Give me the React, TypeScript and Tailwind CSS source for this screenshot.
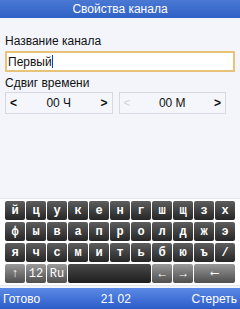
import React from 'react';

const rows = [
  ['й', 'ц', 'у', 'к', 'е', 'н', 'г', 'ш', 'щ', 'з', 'х'],
  ['ф', 'ы', 'в', 'а', 'п', 'р', 'о', 'л', 'д', 'ж', 'э'],
  ['я', 'ч', 'с', 'м', 'и', 'т', 'ь', 'б', 'ю', 'ъ', '/'],
];

const darkKey =
  'flex items-center justify-center rounded-[2px] bg-gradient-to-b from-[#5e5e5e] to-[#262626] text-white';
const lightKey =
  'flex items-center justify-center rounded-[2px] bg-gradient-to-b from-[#9a9a9a] to-[#4e4e4e] text-white';

const Spinner: React.FC<{ value: string; leftDisabled?: boolean }> = ({ value, leftDisabled }) => (
  <div className="flex-1 h-[22px] border border-[#d4d8e2] bg-[#f4f6fb] flex items-center justify-between px-[4px]">
    <span className={`text-[12px] font-bold ${leftDisabled ? 'text-[#d0d4dc] font-normal' : 'text-[#111]'}`}>&lt;</span>
    <span className="text-[12px] text-[#111]">{value}</span>
    <span className="text-[12px] font-bold text-[#111]">&gt;</span>
  </div>
);

export default function App() {
  return (
    <div
      className="w-[240px] h-[309px] flex flex-col bg-[#f3f5fb] overflow-hidden"
      style={{ fontFamily: '"Liberation Sans", "DejaVu Sans", sans-serif' }}
    >
      {/* Title bar */}
      <div className="h-[18px] bg-gradient-to-b from-[#4a78d4] to-[#2f62c6] flex items-center justify-center text-white text-[12px]">
        Свойства канала
      </div>

      <div className="px-[5px] pt-[16px] flex flex-col">
        <div className="text-[12px] text-[#111] leading-[14px]">Название канала</div>
        <div className="mt-[3px] h-[21px] border-2 border-[#e9c27a] bg-white flex items-center px-[1px]">
          <span className="text-[12px] text-[#111]">Первый</span>
          <span className="w-[1px] h-[13px] bg-[#1a3fb0]"></span>
        </div>
        <div className="mt-[4px] text-[12px] text-[#111] leading-[14px]">Сдвиг времени</div>
        <div className="mt-[2px] flex gap-[6px] pr-[9px]">
          <Spinner value="00 Ч" />
          <Spinner value="00 М" leftDisabled />
        </div>
      </div>

      <div className="flex-1"></div>

      {/* Keyboard */}
      <div
        className="bg-white border-y border-[#e3e7f1] px-[5px] py-[2px] flex flex-col gap-[2px]"
        style={{ fontFamily: '"Liberation Mono", "DejaVu Sans Mono", monospace' }}
      >
        {rows.map((row, i) => (
          <div key={i} className="grid grid-cols-11 gap-[1px] h-[19px]">
            {row.map((k) => (
              <div key={k} className={`${darkKey} text-[12px] font-bold`}>
                {k}
              </div>
            ))}
          </div>
        ))}
        <div className="grid grid-cols-11 gap-[1px] h-[19px]">
          <div className={`${lightKey} text-[12px] font-bold`}>↑</div>
          <div className={`${lightKey} text-[12px]`}>12</div>
          <div className={`${lightKey} text-[12px]`}>Ru</div>
          <div className="col-span-4 rounded-[2px] bg-gradient-to-b from-[#4a4a4a] to-[#1e1e1e]"></div>
          <div className={`${lightKey} text-[12px]`}>←</div>
          <div className={`${lightKey} text-[12px]`}>→</div>
          <div className={`${lightKey} col-span-2 text-[12px]`}>⟵</div>
        </div>
      </div>

      {/* Bottom bar */}
      <div className="mt-[2px] h-[21px] bg-gradient-to-b from-[#5b8ae6] to-[#2c5cc8] flex items-center justify-between px-[3px] text-white text-[12px]">
        <span>Готово</span>
        <span>21 02</span>
        <span>Стереть</span>
      </div>
    </div>
  );
}
